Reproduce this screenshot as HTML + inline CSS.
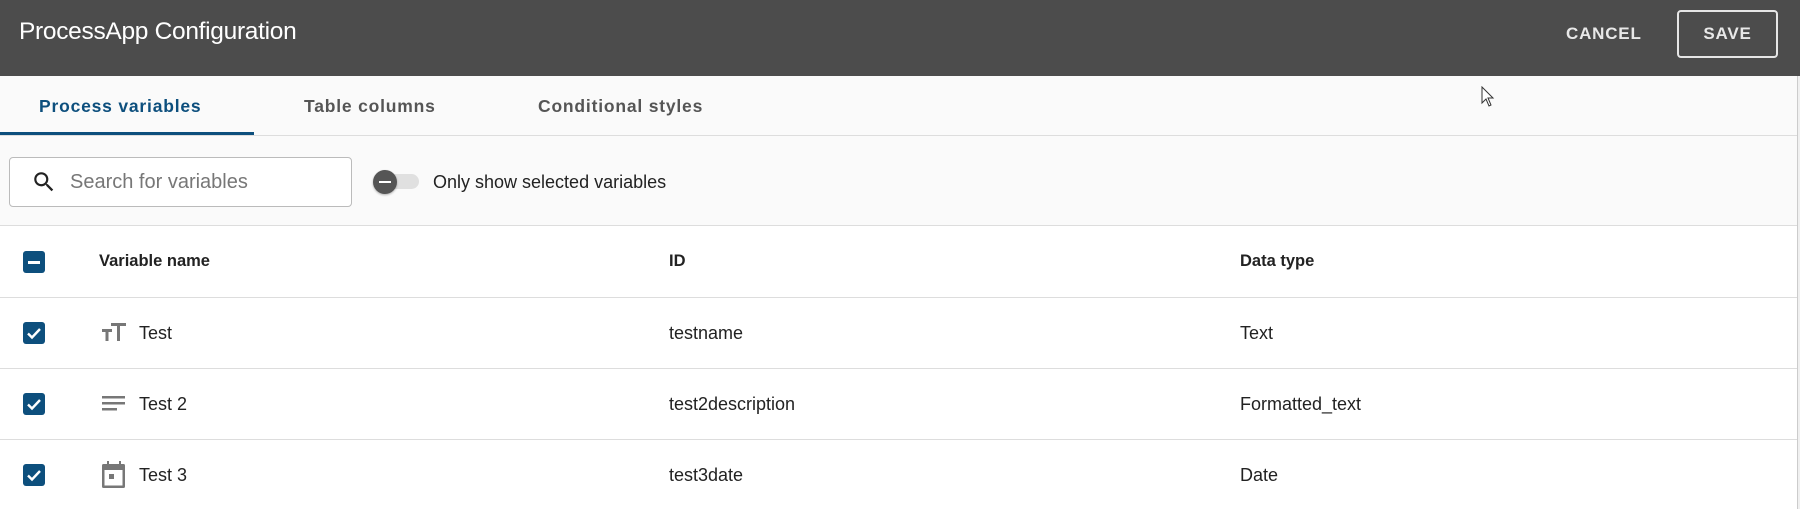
<!DOCTYPE html>
<html><head><meta charset="utf-8"><style>
*{margin:0;padding:0;box-sizing:border-box}
body{width:1800px;height:509px;overflow:hidden;background:#fff;font-family:"Liberation Sans",sans-serif;color:#222;position:relative}
.abs{position:absolute}
.hdr{left:0;top:0;width:1800px;height:76px;background:#4c4c4c}
.title{left:19px;top:18px;font-size:24.5px;color:#fff;letter-spacing:-0.3px}
.cancel{left:1566px;top:24px;font-size:17px;font-weight:bold;color:#e8e8e8;letter-spacing:0.8px}
.save{left:1677px;top:10px;width:101px;height:48px;border:2px solid #e6e6e6;border-radius:4px;color:#e8e8e8;font-size:17px;font-weight:bold;letter-spacing:0.8px;text-align:center;line-height:44px}
.tabs{left:0;top:76px;width:1797px;height:150px;background:#fafafa;border-bottom:1px solid #ddd}
.tabline{left:0;top:135px;width:1797px;height:1px;background:#ddd}
.tab{top:96px;font-size:17.5px;font-weight:bold;letter-spacing:0.8px;color:#555}
.ul{left:0;top:132px;width:254px;height:3px;background:#0d4f7d}
.search{left:9px;top:157px;width:343px;height:50px;border:1px solid #bbb;border-radius:4px;background:#fff}
.ph{left:70px;top:171px;font-size:20px;color:#777}
.lbl{left:433px;top:172px;font-size:18px;color:#222}
.row{left:0;width:1797px;height:1px;background:#ddd}
.cb{left:23px;width:22px;height:22px;background:#0d4f7d;border-radius:3px}
.th{font-size:16.5px;font-weight:bold;color:#222}
.td{font-size:18px;color:#222}
.sb{left:1797px;top:76px;width:3px;height:433px;background:#f0f0f0;border-left:1px solid #ccc}
</style></head><body>
<div class="abs hdr"></div>
<div class="abs title">ProcessApp Configuration</div>
<div class="abs cancel">CANCEL</div>
<div class="abs save">SAVE</div>
<div class="abs tabs"></div>
<div class="abs tabline"></div>
<div class="abs tab" style="left:39px;color:#0d4f7d">Process variables</div>
<div class="abs tab" style="left:304px">Table columns</div>
<div class="abs tab" style="left:538px">Conditional styles</div>
<div class="abs ul"></div>
<svg class="abs" style="left:1481px;top:86px" width="14" height="22" viewBox="0 0 14 22"><path d="M1 1 L1 17 L5 13 L8 20 L10 19 L7 12 L12 12 Z" fill="#fff" stroke="#333" stroke-width="1"/></svg>
<div class="abs search"></div>
<svg class="abs" style="left:31px;top:169px" width="26" height="26" viewBox="0 0 24 24"><path fill="#222" d="M15.5 14h-.79l-.28-.27A6.47 6.47 0 0 0 16 9.5 6.5 6.5 0 1 0 9.5 16c1.610 0 3.09-.59 4.23-1.57l.27.28v.79l5 4.99L20.49 19l-4.99-5zm-6 0C7.01 14 5 11.990 5 9.5S7.01 5 9.5 5 14 7.01 14 9.5 11.99 14 9.5 14z"/></svg>
<div class="abs ph">Search for variables</div>
<div class="abs" style="left:379px;top:174px;width:40px;height:15px;border-radius:8px;background:#e0e0e0"></div>
<div class="abs" style="left:373px;top:170px;width:24px;height:24px;border-radius:50%;background:#555;box-shadow:0 1px 2px rgba(0,0,0,.3)"></div>
<div class="abs" style="left:379px;top:181px;width:12px;height:2px;background:#fff"></div>
<div class="abs lbl">Only show selected variables</div>

<div class="abs cb" style="top:251px"></div>
<div class="abs" style="left:28px;top:261px;width:12px;height:2.5px;background:#fff"></div>
<div class="abs th" style="left:99px;top:252px">Variable name</div>
<div class="abs th" style="left:669px;top:252px">ID</div>
<div class="abs th" style="left:1240px;top:252px">Data type</div>
<div class="abs row" style="top:297px"></div>
<div class="abs row" style="top:368px"></div>
<div class="abs row" style="top:439px"></div>

<div class="abs cb" style="top:322px"></div>
<div class="abs cb" style="top:393px"></div>
<div class="abs cb" style="top:464px"></div>
<svg class="abs" style="left:23px;top:322px" width="22" height="22"><path d="M5 11.5 L9 15.5 L17 7" stroke="#fff" stroke-width="2.4" fill="none"/></svg>
<svg class="abs" style="left:23px;top:393px" width="22" height="22"><path d="M5 11.5 L9 15.5 L17 7" stroke="#fff" stroke-width="2.4" fill="none"/></svg>
<svg class="abs" style="left:23px;top:464px" width="22" height="22"><path d="M5 11.5 L9 15.5 L17 7" stroke="#fff" stroke-width="2.4" fill="none"/></svg>

<svg class="abs" style="left:102px;top:323px" width="24" height="20" viewBox="0 0 24 20"><path fill="#777" d="M0 6h10v3H6.5v9h-3V9H0zM9 0h15v3h-6v15h-3V3H9z"/></svg>
<svg class="abs" style="left:102px;top:396px" width="24" height="16" viewBox="0 0 24 16"><path fill="#777" d="M0 0h23v2.5H0zM0 6h23v2.5H0zM0 12h15v2.5H0z"/></svg>
<svg class="abs" style="left:102px;top:461px" width="24" height="28" viewBox="0 0 24 28"><path fill="#777" d="M5 0h2v3h10V0h2v3h2.5A1.5 1.5 0 0 1 23 4.5v21a1.5 1.5 0 0 1-1.5 1.5h-20A1.5 1.5 0 0 1 0 25.5v-21A1.5 1.5 0 0 1 1.5 3H5zM2.5 9v15.5h18V9z"/><rect x="7" y="13" width="5" height="5" fill="#777"/></svg>

<div class="abs td" style="left:139px;top:323px">Test</div>
<div class="abs td" style="left:139px;top:394px">Test 2</div>
<div class="abs td" style="left:139px;top:465px">Test 3</div>
<div class="abs td" style="left:669px;top:323px">testname</div>
<div class="abs td" style="left:669px;top:394px">test2description</div>
<div class="abs td" style="left:669px;top:465px">test3date</div>
<div class="abs td" style="left:1240px;top:323px">Text</div>
<div class="abs td" style="left:1240px;top:394px">Formatted_text</div>
<div class="abs td" style="left:1240px;top:465px">Date</div>
<div class="abs sb"></div>
</body></html>
